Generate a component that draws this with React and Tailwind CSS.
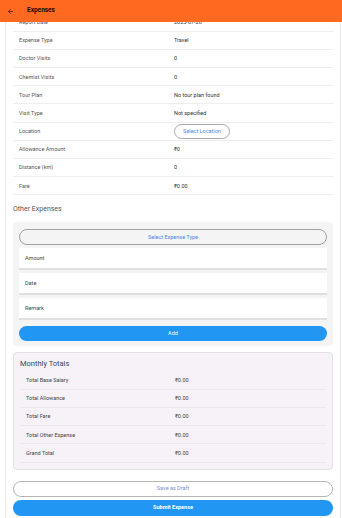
import { ArrowLeft } from 'lucide-react';

const detalles = [
  { label: 'Report Date', value: '2025-07-28' },
  { label: 'Expense Type', value: 'Travel' },
  { label: 'Doctor Visits', value: '0' },
  { label: 'Chemist Visits', value: '0' },
  { label: 'Tour Plan', value: 'No tour plan found' },
  { label: 'Visit Type', value: 'Not specified' },
  { label: 'Location', value: null },
  { label: 'Allowance Amount', value: '₹0' },
  { label: 'Distance (km)', value: '0' },
  { label: 'Fare', value: '₹0.00' },
];

const totales = [
  { label: 'Total Base Salary', value: '₹0.00' },
  { label: 'Total Allowance', value: '₹0.00' },
  { label: 'Total Fare', value: '₹0.00' },
  { label: 'Total Other Expense', value: '₹0.00' },
  { label: 'Grand Total', value: '₹0.00' },
];

export default function App() {
  return (
    <div className="flex h-[518px] w-[342px] flex-col overflow-hidden bg-white font-['Roboto',sans-serif]">
      <header className="relative z-10 flex h-[22px] shrink-0 items-center bg-[#ff6920] pl-[7px]">
        <ArrowLeft size={7} strokeWidth={3} className="text-[#6b1f05]" />
        <h1 className="ml-[13px] text-[6.5px] font-bold text-[#1a0a02]">Expenses</h1>
      </header>

      <main className="flex-1 overflow-hidden">
        <div className="-mt-[8.5px] ml-[5px] mr-[1px] border-x border-[#ebebeb] px-[7px] pb-[4px]">
          <div>
            {detalles.map((d) => (
              <div key={d.label} className="flex h-[18.2px] items-center border-b border-[#eeeeee] pl-[6px] text-[5.5px]">
                <span className="w-[155px] text-[#555]">{d.label}</span>
                {d.value !== null ? (
                  <span className="text-[#333]">{d.value}</span>
                ) : (
                  <button className="flex h-[15px] w-[56px] items-center justify-center rounded-full border border-[#a8a8a8] text-[5.5px] text-[#4f86e6]">
                    Select Location
                  </button>
                )}
              </div>
            ))}
          </div>

          <h2 className="mt-[9px] text-[7px] text-[#555]">Other Expenses</h2>

          <section className="mt-[7px] rounded-[3px] bg-[#f4f4f4] px-[6px] pb-[5px] pt-[7px]">
            <button className="flex h-[16px] w-full items-center justify-center rounded-full border border-[#a0a0a0] text-[5.5px] text-[#4f86e6]">
              Select Expense Type
            </button>
            <div className="mt-[3.5px] space-y-[3.5px]">
              {['Amount', 'Date', 'Remark'].map((campo) => (
                <div key={campo} className="flex h-[21.5px] items-center border-b-[2px] border-[#e0e0e0] bg-white pl-[6px] text-[5.5px] text-[#444]">
                  {campo}
                </div>
              ))}
            </div>
            <button className="mt-[6px] flex h-[15px] w-full items-center justify-center rounded-full bg-[#2196f3] text-[5.5px] text-white">
              Add
            </button>
          </section>

          <section className="mt-[6px] rounded-[4px] border border-[#e4e0e6] bg-[#f6f2f7] px-[6px] pb-[6px] pt-[5px]">
            <h2 className="text-[7.5px] text-[#3a4366]">Monthly Totals</h2>
            <div className="mt-[2.5px]">
              {totales.map((t) => (
                <div key={t.label} className="flex h-[18.2px] items-center border-b border-[#ebe7ec] pl-[6px] text-[5.5px]">
                  <span className="w-[149px] text-[#444]">{t.label}</span>
                  <span className="text-[#444]">{t.value}</span>
                </div>
              ))}
            </div>
          </section>

          <div className="mt-[11px] space-y-[3px]">
            <button className="flex h-[16px] w-full items-center justify-center rounded-full border border-[#b5b5b5] text-[5.5px] text-[#7c8fd6]">
              Save as Draft
            </button>
            <button className="flex h-[16px] w-full items-center justify-center rounded-full bg-[#2196f3] text-[5.5px] font-bold text-white">
              Submit Expense
            </button>
          </div>
        </div>
      </main>
    </div>
  );
}
